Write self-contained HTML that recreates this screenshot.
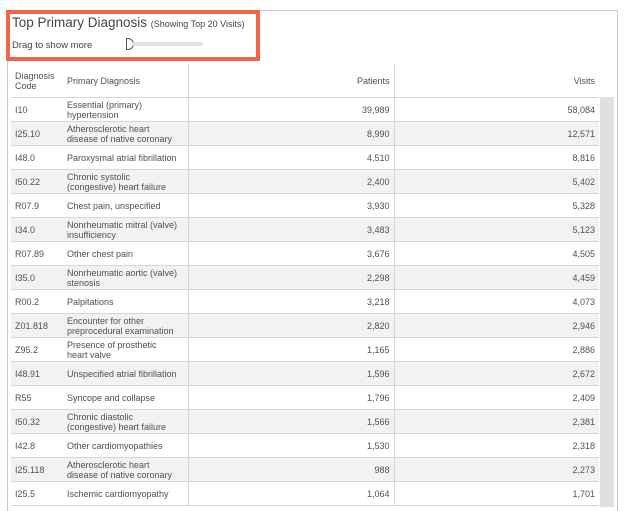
<!DOCTYPE html>
<html><head><style>
body{margin:0;width:625px;height:507px;background:#fff;font-family:"Liberation Sans",Arial,sans-serif;color:#555;overflow:hidden;position:relative}
.frame{position:absolute;left:7px;top:10px;width:609px;height:500px;border:1px solid #c8c8c8;border-bottom:none}
.red{position:absolute;left:6px;top:10px;width:246px;height:43px;border:4px solid #f06449}
.t1{position:absolute;left:12px;top:15px;font-size:13.5px;color:#444}
.t1 span{font-size:9px}
.t2{position:absolute;left:12px;top:40px;font-size:9.5px;color:#444}
.knob{position:absolute;left:126px;top:38px;width:6px;height:10px;border:1px solid #555;border-radius:0 6px 6px 0;background:#fff}
.track{position:absolute;left:133px;top:42px;width:70px;height:4px;background:#e3e3e3}
.sb{position:absolute;left:600px;top:97px;width:14px;height:410px;background:#e0e0e0}
table{position:absolute;left:11px;top:64px;border-collapse:collapse;font-size:9px;width:588px;table-layout:fixed;color:#505050}
td,th{font-weight:normal;padding:1px 4px 0;line-height:10.5px;border-bottom:1px solid #d6d6d6;height:22px;text-align:left;vertical-align:middle}
th{height:32px}
td:nth-child(2),th:nth-child(2){padding-right:10px}
th:nth-child(2),td:nth-child(2){border-right:1px solid #d6d6d6}
th:nth-child(3),td:nth-child(3){border-right:1px solid #d6d6d6;text-align:right}
th:nth-child(4),td:nth-child(4){text-align:right}
tr:nth-child(odd) td{background:#f2f2f2}
</style></head><body>
<div class="frame"></div>
<div class="red"></div>
<div class="t1">Top Primary Diagnosis <span>(Showing Top 20 Visits)</span></div>
<div class="t2">Drag to show more</div>
<div class="knob"></div><div class="track"></div>
<div class="sb"></div>
<table>
<colgroup><col style="width:52px"><col style="width:125px"><col style="width:206px"><col style="width:205px"></colgroup>
<tr><th>Diagnosis Code</th><th>Primary Diagnosis</th><th>Patients</th><th>Visits</th></tr>
<tr><td>I10</td><td>Essential (primary) hypertension</td><td>39,989</td><td>58,084</td></tr>
<tr><td>I25.10</td><td>Atherosclerotic heart disease of native coronary</td><td>8,990</td><td>12,571</td></tr>
<tr><td>I48.0</td><td>Paroxysmal atrial fibrillation</td><td>4,510</td><td>8,816</td></tr>
<tr><td>I50.22</td><td>Chronic systolic (congestive) heart failure</td><td>2,400</td><td>5,402</td></tr>
<tr><td>R07.9</td><td>Chest pain, unspecified</td><td>3,930</td><td>5,328</td></tr>
<tr><td>I34.0</td><td>Nonrheumatic mitral (valve) insufficiency</td><td>3,483</td><td>5,123</td></tr>
<tr><td>R07.89</td><td>Other chest pain</td><td>3,676</td><td>4,505</td></tr>
<tr><td>I35.0</td><td>Nonrheumatic aortic (valve) stenosis</td><td>2,298</td><td>4,459</td></tr>
<tr><td>R00.2</td><td>Palpitations</td><td>3,218</td><td>4,073</td></tr>
<tr><td>Z01.818</td><td>Encounter for other preprocedural examination</td><td>2,820</td><td>2,946</td></tr>
<tr><td>Z95.2</td><td>Presence of prosthetic heart valve</td><td>1,165</td><td>2,886</td></tr>
<tr><td>I48.91</td><td>Unspecified atrial fibrillation</td><td>1,596</td><td>2,672</td></tr>
<tr><td>R55</td><td>Syncope and collapse</td><td>1,796</td><td>2,409</td></tr>
<tr><td>I50.32</td><td>Chronic diastolic (congestive) heart failure</td><td>1,566</td><td>2,381</td></tr>
<tr><td>I42.8</td><td>Other cardiomyopathies</td><td>1,530</td><td>2,318</td></tr>
<tr><td>I25.118</td><td>Atherosclerotic heart disease of native coronary</td><td>988</td><td>2,273</td></tr>
<tr><td>I25.5</td><td>Ischemic cardiomyopathy</td><td>1,064</td><td>1,701</td></tr>
</table>
</body></html>
